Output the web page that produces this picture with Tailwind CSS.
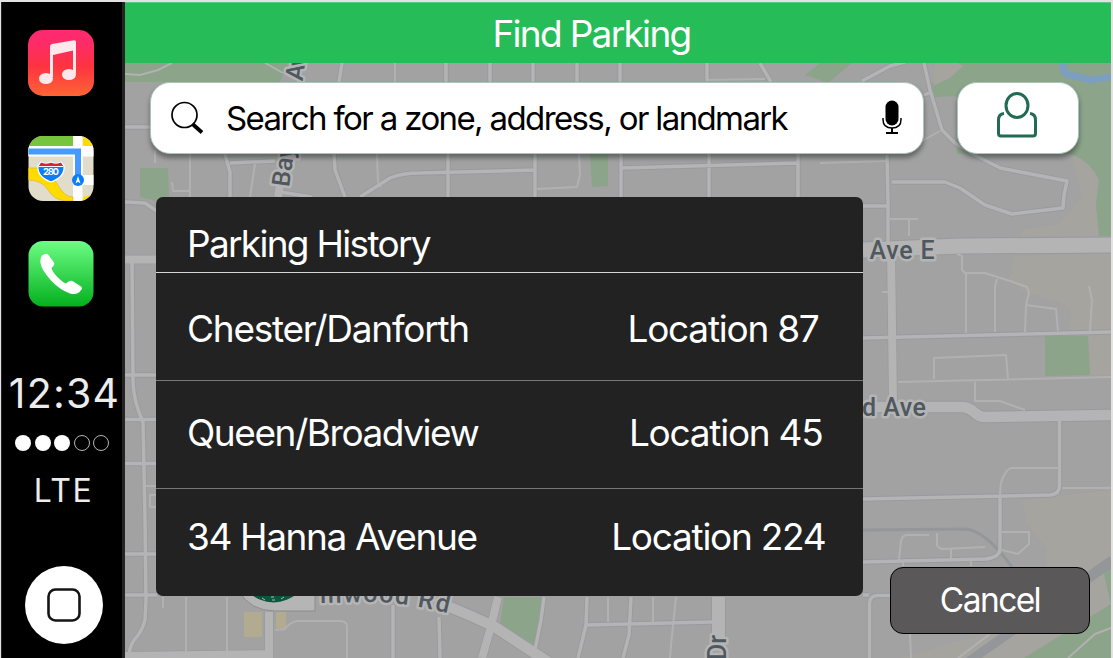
<!DOCTYPE html>
<html lang="en">
<head>
<meta charset="utf-8">
<title>Find Parking</title>
<script src="https://cdn.jsdelivr.net/npm/@tailwindcss/browser@4"></script>
</head>
<body class="w-[1113px] h-[658px] overflow-hidden bg-[#e2e2e2] font-['Inter',sans-serif] pt-[2px] pl-[1px] pr-[2px]">
<div class="flex h-[656px] w-[1110px]">
  <aside class="flex flex-col items-center w-[124px] shrink-0 bg-black border-l border-r-3 border-[#242424] text-[#ececec]">
    <svg class="mt-[28px] mr-[2px] shrink-0" width="66" height="66" viewBox="0 0 66 66">
      <defs><linearGradient id="m" x2="0" y2="1"><stop offset="0" stop-color="#fe2a72"/><stop offset=".2" stop-color="#fe2b68"/><stop offset=".55" stop-color="#fd3340"/><stop offset="1" stop-color="#fe6535"/></linearGradient></defs>
      <rect width="66" height="66" rx="15" fill="url(#m)"/>
      <g fill="#ffe8ec"><path d="M22 16.500Q22 14.500 24 14L46 10.200Q48 10 48 12V43H45V20.500L25 25V47H22Z"/><ellipse cx="18" cy="48.500" rx="7" ry="5.500"/><ellipse cx="41" cy="44.500" rx="7" ry="5.500"/></g>
    </svg>
    <svg class="mt-[40px] mr-[2px] shrink-0" width="66" height="65" viewBox="0 0 66 65">
      <defs><clipPath id="mc"><rect x=".5" width="65" height="65" rx="14.500"/></clipPath></defs>
      <g clip-path="url(#mc)">
        <rect width="66" height="65" fill="#e2dccb"/>
        <rect width="45" height="11" fill="#76c53c"/><rect x="45" y="0" width="9.500" height="65" fill="#fff"/>
        <rect x="55" width="11" height="11" fill="#ffdb00"/><rect y="10" width="66" height="10.500" fill="#fff"/><rect x="45" y="39" width="21" height="10" fill="#fff"/>
        <path d="M0 32H10Q26 41 30 49Q36 61 45 61V65H38Q26 64 20 54Q14 44 0 44Z" fill="#ffdb00" stroke="#e3a93a" stroke-width=".6"/>
        <path d="M55 61L66 58V65H55Z" fill="#ffdb00"/>
        <path d="M0 15.500H50V42" fill="none" stroke="#fff" stroke-width="9"/><path d="M0 15.500H50V42" fill="none" stroke="#459bff" stroke-width="6"/>
        <circle cx="50" cy="44" r="6" fill="#0b7dfb"/><path d="M50 40L52.500 47.500L50 45.800L47.500 47.500Z" fill="#fff"/>
        <path d="M13 26Q18 29 23 26Q28 29 33 26L36 30Q37 41 23 46Q9 41 10 30Z" fill="#0b7dfb" stroke="#fff" stroke-width="1.200"/>
        <path d="M13.300 26.500Q18 29 23 26.700Q28 29 32.700 26.500L35 30.500H11Z" fill="#d9232e"/><path d="M10.500 30.500H35.500" stroke="#fff" stroke-width="1"/>
        <text x="23" y="39.300" text-anchor="middle" font-size="9.500" font-weight="700" fill="#fff" textLength="16">280</text>
      </g>
    </svg>
    <svg class="mt-[40px] mr-[2px] shrink-0" width="66" height="66" viewBox="0 0 66 66">
      <defs><linearGradient id="p" x2="0" y2="1"><stop offset="0" stop-color="#6dfd85"/><stop offset="1" stop-color="#04b01e"/></linearGradient></defs>
      <rect x=".5" width="65" height="65.500" rx="14.500" fill="url(#p)"/>
      <path d="M14 14.500Q18 11.500 20 13.500L26 21.500Q27 24 23.500 27Q24 31 31.500 38Q35 41.500 38 42.500Q41 39 44.500 40L53 45.500Q55 47 53 49Q50 54.500 42 52.500Q32 49 23 39.500Q13.500 29 12.500 22Q12 17 14 14.500Z" fill="#fff"/>
    </svg>
    <div class="mt-[62px] ml-[5px] h-[48px] whitespace-nowrap text-[41px] leading-[48px] font-normal tracking-[1.200px]">12:34</div>
    <div class="mt-[18px] flex h-[16px] gap-[3.500px]">
      <i class="size-[16px] rounded-full bg-white"></i><i class="size-[16px] rounded-full bg-white"></i><i class="size-[16px] rounded-full bg-white"></i><i class="size-[16px] rounded-full border-[1.500px] border-[#b5b5b5]"></i><i class="size-[16px] rounded-full border-[1.500px] border-[#b5b5b5]"></i>
    </div>
    <div class="mt-[19px] ml-[3px] h-[40px] whitespace-nowrap text-[32px] leading-[42px] font-normal tracking-[1.500px]">LTE</div>
    <svg class="mt-[55px] ml-[4px] shrink-0" width="80" height="80" viewBox="0 0 80 80"><circle cx="40" cy="40" r="39" fill="#fff"/><rect x="24.500" y="24.500" width="31" height="31" rx="7" fill="none" stroke="#151515" stroke-width="2.600"/></svg>
  </aside>

  <div class="flex flex-col w-[986px] shrink-0">
    <header class="h-[61px] shrink-0 bg-[#26bd59] border-t border-[#55cb7d] text-white text-center text-[37px] leading-[62px] pr-[53px] whitespace-nowrap tracking-[-1.700px]">Find Parking</header>
    <main class="relative h-[595px] overflow-hidden">
      <svg class="absolute inset-0" width="986" height="595" viewBox="125 63 986 595" fill="none" stroke-linejoin="round">
        <rect x="125" y="63" width="986" height="595" fill="#a2a2a2"/>
        <g fill="#a6a49e">
          <path d="M1070 150L1099 175L1097 190L1099 236H1020L1023 230L1060 224L1082 196ZM1014 256L1010 278L1022 290L1060 302Q1078 312 1068 330L1111 332V253ZM1088 335H1111V375H1090ZM1023 500L1111 490V604L1024 658H900L1000 630L1047 566V550L1025 520Z"/>
        </g>
        <g fill="#8ba48a">
          <path d="M125 63H288L280 82H125ZM805 75L820 63H852L828 83ZM950 63H1111V236H1099L1096 205L1099 180Q1090 160 1070 154H957V96L935 97L930 84L963 66ZM140 168H168L169 197L160 202L140 197ZM590 154H608V186L592 187ZM1045 336H1088L1090 375L1045 376ZM504 597H541L540 620L535 645L500 625ZM1024 658L1111 604V658ZM1104 574L1111 566V604Z"/>
        </g>
        <path d="M935 63H958L963 66L950 78L933 86Z" fill="#a6a49e"/>
        <path d="M1063 63Q1062 76 1075 76L1090 80L1111 77" stroke="#7c9fbf" stroke-width="7"/>
        <path d="M244 612H262V637H244ZM276 612H286V628H276Z" fill="#b3ab90"/>
        <g stroke="#94979a">
          <path d="M863 530L965 529Q985 530 1012 567" stroke-width="3"/>
          <path d="M968 662L1112 560" stroke-width="9"/><path d="M990 650L1112 566" stroke-width="3"/>
        </g>
        <g stroke="#999a9f">
          <g stroke-width="5.300"><use href="#r4"/></g><g stroke-width="9.500"><use href="#r8"/></g><g stroke-width="12.500"><use href="#r11"/></g>
          <path d="M863 250L960 246L1111 245" stroke-width="17"/><path d="M718.500 597V640" stroke-width="15"/>
        </g>
        <g stroke="#b1b1b2" stroke-width="2">
          <path d="M125 74L140 75L158 70L172 63M265 63L283 73M395 63V82M155 150V163M190 154V200M172 182L173 191H190M255 164L250 197M377 154L378 182L381 187M579 154L580 175L577 187L537 189M707 80L765 79M922 141L940 131M820 163L887 161M890 219H918M909 219V236M957 254L962 256V270L966 274M966 333V273H985L1010 281L1027 287L1029 293L1026 305L1025 332M995 332V286L997 279M1026 305L1056 309L1058 331M1089 286L1092 300L1090 331M882 292H888M934 379V358L1006 355L1008 379M898 382L1111 377M975 382V401H1000L1025 410M1060 468H1012Q1008 468 1005 474Q1000 480 1000 495M1062 488H1111M1002 532H1029V544L1018 554L1002 550M899 560L901 541Q902 535 908 535H929M937 533V545Q938 549 944 549L985 547M951 549V558M903 560V566M971 560V566M910 634L911 658M958 658L990 634M163 597V608M186 597V652M227 597V652M275 630L285 629Q290 622 297 621H340Q347 621 347 627V658M608 597V622M653 597V622M676 597L671 645L670 658M1068 658L1095 634L1111 628M146 486H157M150 507V495H157M150 507H157"/>
        </g>
        <g stroke="#b4b4b5">
          <g id="r4"><path d="M342 63L339 82M446 63V82M490 63V82M533 63V82M577 63V82M620 63V82M707 63V81M760 63L771 82M862 81L890 66L905 62M924 63L930 90L942 130L955 143L975 155L1000 168L1067 181L1064 195L1063 208L1012 214L985 205L960 188L945 182L892 182M924 95L929 93M887 155L888 200V245M863 206H887M863 338L1111 332M1059.500 420V485Q1060 494 1050 495L863 499M1000 497V550Q998 558 985 559L863 562M869.500 658V603Q870 595.500 878 595.500H890M863 595H869M125 202L145 203L158 212M132 262L133 380Q133 400 143 422L145 520L146 600L145 620Q142 632 134 640Q128 650 130 656M125 375H157M125 419.500H157M125 463.500H157M125 554H157M125 595H157M125 127H152M225 154L228 165L230 172V197M230 163L275 161M280 192L312 197M334 154L335 170L345 197M360 197L390 178Q402 173 420 173L535 170M448 154V197M535 154V197M621 154V197M709 154V197M798 154V197M622 168L798 163M393 605V658M439 617L440 658M544 597L541 620L535 650M587 597L586 625L578 658M631 597L629 635L623 658M586 625L712 622"/></g>
          <g id="r8"><path d="M125 259.500H157M891 250L893 400M292 110L278 197M125 656L270 654M269 612V658M498 597L490 630L482 658"/></g>
          <g id="r11"><path d="M863 407H963Q970 408 974 412Q979 417 985 417L1111 415M440 603Q470 615 495 627L548 662"/></g>
        </g>
        <g stroke="#b4b4b5"><use href="#r4" stroke-width="3.500"/><use href="#r8" stroke-width="8"/><use href="#r11" stroke-width="10.500"/><path d="M863 250L960 246L1111 245" stroke-width="15"/><path d="M718.500 597V640" stroke-width="13"/></g>
        <path d="M238 590Q250 611 275 611H315V590Z" fill="#b5b5b5" stroke="#8d8d8d"/>
        <circle cx="273.500" cy="568" r="34.500" fill="#0c573b"/>
        <path d="M262 598l3 2M271 597h3M272 600h3M281 599l3-2" stroke="#b5b5b5"/>
        <path id="mill" d="M320 603L370 602Q410 602 470 619"/>
        <g font-family="Roboto" font-weight="500" font-size="25" fill="#50585f" stroke="#b5b5b5" stroke-width="5" paint-order="stroke">
          <text x="869.500" y="259" textLength="65">Ave E</text>
          <text x="862" y="416" textLength="64">d Ave</text>
          <text transform="translate(289 187.500) rotate(-82)">Bay</text>
          <text transform="translate(302.500 81.500) rotate(-82)" textLength="38">Ave</text>
          <text transform="translate(726 660) rotate(-90)">Dr</text>
          <text><textPath href="#mill" textLength="129">illwood Rd</textPath></text>
        </g>
      </svg>

      <div class="relative flex gap-[33px] pt-[18.500px] pl-[25px]">
        <div class="flex items-center w-[774px] h-[72.500px] rounded-[20px] bg-white border border-[#a9c4bb] shadow-[0_4px_5px_rgba(0,0,0,.38)] pl-[19px]">
          <svg class="shrink-0" width="34" height="34" viewBox="0 0 34 34" fill="none" stroke="#000"><circle cx="14.500" cy="14" r="12.500" stroke-width="1.700"/><path d="M22.500 23L32 31.500" stroke-width="3.800"/></svg>
          <div class="ml-[22px] w-[580px] whitespace-nowrap text-[33px] leading-[38px] text-black tracking-[-1.620px]">Search for a zone, address, or landmark</div>
          <svg class="ml-[76px] mb-[2px] shrink-0" width="20" height="34" viewBox="0 0 20 34" fill="none" stroke="#000"><rect x="3.500" y=".5" width="13" height="25" rx="6.500" fill="#000" stroke="none"/><path d="M1 18V19.500Q1 28 10 28Q19 28 19 19.500V18" stroke-width="1.500"/><path d="M10 28V33M4 33H16" stroke-width="2"/></svg>
        </div>
        <div class="flex justify-center w-[122px] h-[72.500px] rounded-[20px] bg-white border border-[#a9c4bb] shadow-[0_4px_5px_rgba(0,0,0,.38)] pt-[9px] pr-[2px]">
          <svg width="42" height="48" viewBox="0 0 42 48" fill="none" stroke="#246b54" stroke-width="3"><ellipse cx="21" cy="13.500" rx="11" ry="12"/><path d="M8 21.500Q2.500 22 2.500 28V41.500Q2.500 44 5 44H37Q39.500 44 39.500 41.500V28Q39.500 22 34 21.500"/></svg>
        </div>
      </div>

      <section class="relative mt-[43px] ml-[31px] w-[707px] h-[399px] rounded-[7px] bg-[#222] text-white text-[37px] whitespace-nowrap overflow-hidden">
        <h1 class="h-[76px] border-b-[1.500px] border-[#d5d5d5] pl-[31px] leading-[94px] tracking-[-1.700px]">Parking History</h1>
        <div class="flex justify-between h-[108px] border-b border-[#777] pl-[31px] pr-[44.500px] leading-[111px] tracking-[-1.250px]"><span>Chester/Danforth</span><span>Location 87</span></div>
        <div class="flex justify-between h-[108px] border-b border-[#777] pl-[31px] pr-[40.500px] leading-[103px]"><span class="tracking-[-1.450px]">Queen/Broadview</span><span class="tracking-[-1.250px]">Location 45</span></div>
        <div class="flex justify-between h-[107px] pl-[31px] pr-[37.500px] leading-[95px]"><span class="tracking-[-1.370px]">34 Hanna Avenue</span><span class="tracking-[-1.250px]">Location 224</span></div>
      </section>

      <button class="absolute right-[21px] bottom-[24px] w-[200px] h-[67px] rounded-[13px] border-[1.500px] border-black bg-[#5b5859] text-white text-[33.500px] leading-[62px] pb-[2px] tracking-[-1.600px]">Cancel</button>
    </main>
  </div>
</div>
</body>
</html>
